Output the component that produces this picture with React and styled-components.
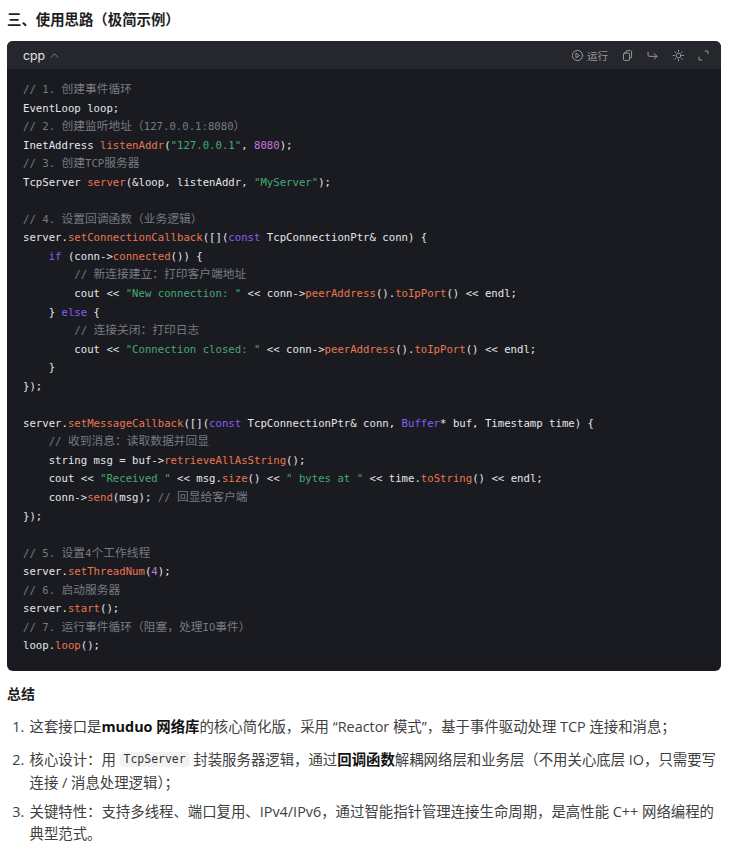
import React from "react";
import styled, { createGlobalStyle } from "styled-components";

const Global = createGlobalStyle`
  html, body { margin: 0; padding: 0; background: #fff; }
  body { font-family: "Open Sans", "Noto Sans CJK SC", sans-serif; color: #262626; }
`;
const Page = styled.div`
  width: 742px; height: 850px; overflow: hidden; box-sizing: border-box; padding: 10px 21px 0 7px;
`;
const Heading = styled.h3`
  margin: 0 0 11px; font-size: 14.4px; line-height: 20px; font-weight: 700; color: #1f1f1f;
`;
const CodeCard = styled.div`
  border-radius: 6px; overflow: hidden; background: #1a1b20;
`;
const CodeBar = styled.div`
  height: 28px; background: #26272c; display: flex; align-items: center; justify-content: space-between; padding: 0 11px 0 16px;
`;
const Lang = styled.div`
  display: flex; align-items: center; gap: 4px; color: #e3e3e6; font-size: 12.3px; font-family: Inter, sans-serif;
`;
const Caret = styled.span`
  display: flex; color: #8f9096;
`;
const Tools = styled.div`
  display: flex; align-items: center; gap: 12.5px; color: #9a9ba0;
`;
const RunBtn = styled.div`
  display: flex; align-items: center; gap: 3.5px; font-size: 10.5px;
`;
const Code = styled.pre`
  margin: 0; padding: 12px 16px 15px; font-family: "DejaVu Sans Mono", "Noto Sans CJK SC", monospace;
  font-size: 10.67px; line-height: 18.55px; color: #e4e6ea;
`;
const C = styled.span`color: #777a82;`;
const Z = styled.span`font-family: "Noto Sans CJK SC", sans-serif; font-size: 11.75px; line-height: 0;`;
const F = styled.span`color: #ea7650;`;
const S = styled.span`color: #46a873;`;
const N = styled.span`color: #c678dd;`;
const K = styled.span`color: #8b5cf6;`;
const SubHeading = styled.h4`
  margin: 13px 0 12.5px; font-size: 14px; line-height: 20px; font-weight: 700; color: #1f1f1f;
`;
const List = styled.ol`
  margin: 0; padding: 0 0 0 21px; font-size: 14.4px; line-height: 22px; color: #404040;
`;
const Item = styled.li`
  margin-bottom: 7px; padding-left: 1.5px;
`;
const Strong = styled.strong`color: #111; font-weight: 700;`;
const Inline = styled.code`
  display: inline-block; font-family: "DejaVu Sans Mono", monospace; font-size: 11.45px; line-height: 15px;
  background: #f2f2f3; border-radius: 4px; padding: 0 4px; margin: 6.8px 0 4.5px; vertical-align: 2px; color: #333;
`;
const Icon = ({ children, size = 13 }) => (
  <svg width={size} height={size} viewBox="0 0 16 16" fill="none" stroke="currentColor" strokeWidth="1.2" strokeLinecap="round" strokeLinejoin="round">{children}</svg>
);

export default function App() {
  return (
    <Page>
      <Global />
      <Heading>三、使用思路（极简示例）</Heading>
      <CodeCard>
        <CodeBar>
          <Lang>cpp
            <Caret><Icon size={11}><path d="M3 10.500 8 5.500l5 5" /></Icon></Caret>
          </Lang>
          <Tools>
            <RunBtn>
              <Icon><circle cx="8" cy="8" r="6.300" /><path d="M6.500 5.500 10.500 8l-4 2.500z" /></Icon>运行
            </RunBtn>
            <Icon><rect x="3" y="5" width="7.500" height="9" rx="1.200" /><path d="M6 5V3.200C6 2.500 6.500 2 7.200 2h4.600c.7 0 1.200.5 1.200 1.200V10c0 .7-.5 1.200-1.200 1.200h-1.300" /></Icon>
            <Icon><path d="M2.500 4v3.500c0 .8.7 1.500 1.500 1.500h9.500M10 5.500 13.500 9 10 12.500" /></Icon>
            <Icon><circle cx="8" cy="8" r="3" /><path d="M8 1.500v1.500M8 13v1.500M1.500 8H3M13 8h1.500M3.400 3.400l1 1M11.600 11.600l1 1M3.400 12.600l1-1M11.600 4.400l1-1" /></Icon>
            <Icon><path d="M10 2.500h3.500V6M6 13.500H2.500V10" /></Icon>
          </Tools>
        </CodeBar>
        <Code>
<C>// 1. <Z>创建事件循环</Z></C>{"\n"}
EventLoop loop;{"\n"}
<C>// 2. <Z>创建监听地址（</Z>127.0.0.1:8080<Z>）</Z></C>{"\n"}
InetAddress <F>listenAddr</F>(<S>"127.0.0.1"</S>, <N>8080</N>);{"\n"}
<C>// 3. <Z>创建</Z>TCP<Z>服务器</Z></C>{"\n"}
TcpServer <F>server</F>(&amp;loop, listenAddr, <S>"MyServer"</S>);{"\n"}
{"\n"}
<C>// 4. <Z>设置回调函数（业务逻辑）</Z></C>{"\n"}
server.<F>setConnectionCallback</F>([](<K>const</K> TcpConnectionPtr&amp; conn) {"{"}{"\n"}
{"    "}<K>if</K> (conn-&gt;<F>connected</F>()) {"{"}{"\n"}
{"        "}<C>// <Z>新连接建立：打印客户端地址</Z></C>{"\n"}
{"        "}cout &lt;&lt; <S>"New connection: "</S> &lt;&lt; conn-&gt;<F>peerAddress</F>().<F>toIpPort</F>() &lt;&lt; endl;{"\n"}
{"    "}{"}"} <K>else</K> {"{"}{"\n"}
{"        "}<C>// <Z>连接关闭：打印日志</Z></C>{"\n"}
{"        "}cout &lt;&lt; <S>"Connection closed: "</S> &lt;&lt; conn-&gt;<F>peerAddress</F>().<F>toIpPort</F>() &lt;&lt; endl;{"\n"}
{"    }"}{"\n"}
{"});"}{"\n"}
{"\n"}
server.<F>setMessageCallback</F>([](<K>const</K> TcpConnectionPtr&amp; conn, <K>Buffer</K>* buf, Timestamp time) {"{"}{"\n"}
{"    "}<C>// <Z>收到消息：读取数据并回显</Z></C>{"\n"}
{"    "}string msg = buf-&gt;<F>retrieveAllAsString</F>();{"\n"}
{"    "}cout &lt;&lt; <S>"Received "</S> &lt;&lt; msg.<F>size</F>() &lt;&lt; <S>" bytes at "</S> &lt;&lt; time.<F>toString</F>() &lt;&lt; endl;{"\n"}
{"    "}conn-&gt;<F>send</F>(msg); <C>// <Z>回显给客户端</Z></C>{"\n"}
{"});"}{"\n"}
{"\n"}
<C>// 5. <Z>设置</Z>4<Z>个工作线程</Z></C>{"\n"}
server.<F>setThreadNum</F>(<N>4</N>);{"\n"}
<C>// 6. <Z>启动服务器</Z></C>{"\n"}
server.<F>start</F>();{"\n"}
<C>// 7. <Z>运行事件循环（阻塞，处理</Z>IO<Z>事件）</Z></C>{"\n"}
loop.<F>loop</F>();
        </Code>
      </CodeCard>
      <SubHeading>总结</SubHeading>
      <List>
        <Item>这套接口是<Strong>muduo 网络库</Strong>的核心简化版，采用 “Reactor 模式”，基于事件驱动处理 TCP 连接和消息；</Item>
        <Item>核心设计：用 <Inline>TcpServer</Inline> 封装服务器逻辑，通过<Strong>回调函数</Strong>解耦网络层和业务层（不用关心底层 IO，只需要写连接 / 消息处理逻辑）；</Item>
        <Item>关键特性：支持多线程、端口复用、IPv4/IPv6，通过智能指针管理连接生命周期，是高性能 C++ 网络编程的典型范式。</Item>
      </List>
    </Page>
  );
}
